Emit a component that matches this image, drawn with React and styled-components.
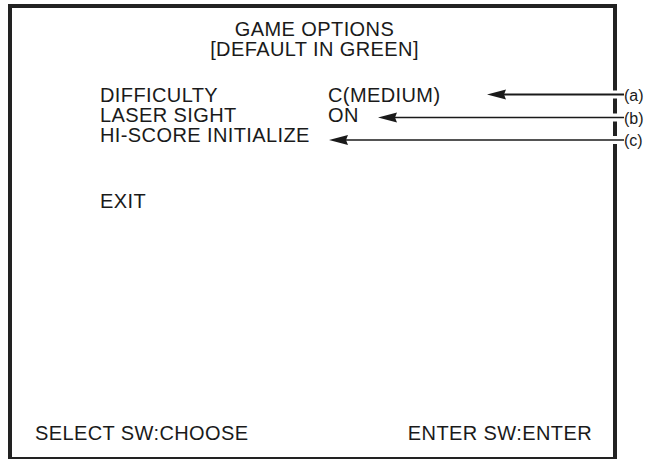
import React from 'react';
import styled, {createGlobalStyle} from 'styled-components';

const GlobalStyle = createGlobalStyle`
  body {
    margin: 0;
    background: #fff;
    font-family: "Liberation Sans", Arial, sans-serif;
    color: #1a1a1a;
    overflow: hidden;
  }
`;

const Page = styled.div`
  position: relative;
  width: 646px;
  height: 459px;
  padding: 4px 0 0 8px;
  box-sizing: border-box;
`;

const Screen = styled.div`
  width: 609px;
  height: 457px;
  box-sizing: border-box;
  border: 4px solid #222;
  display: flex;
  flex-direction: column;
  padding: 11px 21px 14px 23px;
  font-size: 20px;
  line-height: 20px;
  letter-spacing: 0.4px;
`;

const Title = styled.div`
  text-align: center;
  padding-left: 2px;
`;

const Options = styled.div`
  margin-top: 26px;
  padding-left: 65px;
  display: grid;
  grid-template-columns: 228px auto;
`;

const Label = styled.div``;
const Value = styled.div``;

const Exit = styled.div`
  margin-top: 46px;
  padding-left: 65px;
`;

const Footer = styled.div`
  margin-top: auto;
  display: flex;
  justify-content: space-between;
`;

const Callouts = styled.svg`
  position: absolute;
  left: 0;
  top: 0;
  pointer-events: none;
`;

const CalloutLabel = styled.text`
  font-family: "Liberation Sans", Arial, sans-serif;
  font-size: 16px;
  fill: #1a1a1a;
`;

const arrows = [
  {tip: 487, y: 94.5, label: '(a)', w: 2},
  {tip: 378, y: 117.5, label: '(b)', w: 1.7},
  {tip: 329, y: 140, label: '(c)', w: 1.7},
];

const options = [
  ['DIFFICULTY', 'C(MEDIUM)'],
  ['LASER SIGHT', 'ON'],
  ['HI-SCORE INITIALIZE', ''],
];

export default function App() {
  return (
    <Page>
      <GlobalStyle />
      <Screen>
        <Title>
          GAME OPTIONS<br />[DEFAULT IN GREEN]
        </Title>
        <Options>
          {options.map(([l, v]) => (
            <React.Fragment key={l}>
              <Label>{l}</Label>
              <Value>{v}</Value>
            </React.Fragment>
          ))}
        </Options>
        <Exit>EXIT</Exit>
        <Footer>
          <span>SELECT SW:CHOOSE</span>
          <span>ENTER SW:ENTER</span>
        </Footer>
      </Screen>
      <Callouts width="646" height="459" viewBox="0 0 646 459">
        {arrows.map(a => (
          <g key={a.label}>
            <rect x="611" y={a.y - 4} width="8" height="8" fill="#fff" />
            <line x1={a.tip + 15} y1={a.y} x2="624" y2={a.y} stroke="#1a1a1a" strokeWidth={a.w} />
            <polygon
              points={`${a.tip},${a.y} ${a.tip + 19},${a.y - 5} ${a.tip + 17},${a.y} ${a.tip + 19},${a.y + 5}`}
              fill="#1a1a1a"
            />
            <CalloutLabel x="624" y={a.y + 6}>{a.label}</CalloutLabel>
          </g>
        ))}
      </Callouts>
    </Page>
  );
}
